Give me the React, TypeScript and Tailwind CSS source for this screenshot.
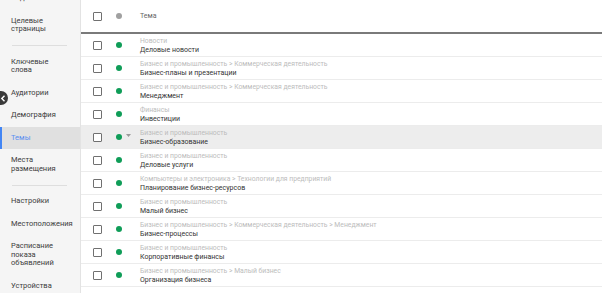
import React from "react";

type Item = { label: string[]; active?: boolean } | { sep: true };

const nav: Item[] = [
  { label: ["Видео"] },
  { label: ["Целевые", "страницы"] },
  { sep: true },
  { label: ["Ключевые", "слова"] },
  { label: ["Аудитории"] },
  { label: ["Демография"] },
  { label: ["Темы"], active: true },
  { label: ["Места", "размещения"] },
  { sep: true },
  { label: ["Настройки"] },
  { label: ["Местоположения"] },
  { label: ["Расписание", "показа", "объявлений"] },
  { label: ["Устройства"] },
];

const rows = [
  { cat: "Новости", name: "Деловые новости" },
  { cat: "Бизнес и промышленность > Коммерческая деятельность", name: "Бизнес-планы и презентации" },
  { cat: "Бизнес и промышленность > Коммерческая деятельность", name: "Менеджмент" },
  { cat: "Финансы", name: "Инвестиции" },
  { cat: "Бизнес и промышленность", name: "Бизнес-образование", hover: true },
  { cat: "Бизнес и промышленность", name: "Деловые услуги" },
  { cat: "Компьютеры и электроника > Технологии для предприятий", name: "Планирование бизнес-ресурсов" },
  { cat: "Бизнес и промышленность", name: "Малый бизнес" },
  { cat: "Бизнес и промышленность > Коммерческая деятельность > Менеджмент", name: "Бизнес-процессы" },
  { cat: "Бизнес и промышленность", name: "Корпоративные финансы" },
  { cat: "Бизнес и промышленность > Малый бизнес", name: "Организация бизнеса" },
  { cat: "", name: "" },
];

function Checkbox() {
  return <div className="w-[9px] h-[9px] border-[1.5px] border-[#707070] rounded-[1px] bg-white shrink-0" />;
}

export default function App() {
  return (
    <div
      className="relative w-[602px] h-[293px] overflow-hidden flex bg-white"
      style={{ fontFamily: "Roboto, 'Noto Sans', sans-serif" }}
    >
      {/* sidebar */}
      <div className="w-[81px] shrink-0 bg-[#f5f5f5] border-r border-[#e3e3e3]">
        <div className="-mt-[13px] flex flex-col">
          {nav.map((it, i) =>
            "sep" in it ? (
              <div key={i} className="mx-[12px] w-[55px] h-px bg-[#dedede] my-[4.5px]" />
            ) : (
              <div
                key={i}
                className={
                  "py-[7px] text-[7.5px] leading-[8.5px] " +
                  (it.active
                    ? "bg-[#e0e0e0] text-[#5b8ff0] border-l-2 border-[#4285f4] pl-[9px]"
                    : "text-[#3c3c3c] pl-[11px]")
                }
              >
                {it.label.map((l) => (
                  <div key={l}>{l}</div>
                ))}
              </div>
            )
          )}
        </div>
      </div>

      {/* table */}
      <div className="flex-1 flex flex-col">
        <div className="h-[34px] shrink-0 flex items-center border-b-2 border-[#7a7a7a]">
          <div className="w-[59px] flex items-center pl-[12px] gap-[14px]">
            <Checkbox />
            <div className="w-[6px] h-[6px] rounded-full bg-[#a0a0a0]" />
          </div>
          <span className="text-[7px] text-[#666]">Тема</span>
        </div>
        {rows.map((r, i) => (
          <div
            key={i}
            className={
              "h-[23px] shrink-0 flex items-center border-b border-[#ececec] " +
              (r.hover ? "bg-[#ededed]" : "")
            }
          >
            {r.name && (
              <>
                <div className="w-[59px] flex items-center pl-[12px] gap-[14px] relative">
                  <Checkbox />
                  <div className="w-[6px] h-[6px] rounded-full bg-[#0f9d58]" />
                  {r.hover && (
                    <svg className="absolute left-[45px] top-[1.5px]" width="5" height="3" viewBox="0 0 5 3">
                      <path d="M0 0h5L2.5 3z" fill="#9a9a9a" />
                    </svg>
                  )}
                </div>
                <div className="flex flex-col leading-[8.7px] pt-[1px]">
                  <span className="text-[6.8px] text-[#bcbcbc] whitespace-nowrap">{r.cat}</span>
                  <span className="text-[7px] text-[#333] whitespace-nowrap">{r.name}</span>
                </div>
              </>
            )}
          </div>
        ))}
      </div>

      {/* collapse button */}
      <div className="absolute left-[-6px] top-[91px] w-[14px] h-[14px] rounded-full bg-[#3a3a3a] flex items-center justify-end pr-[2px]">
        <svg width="6" height="7" viewBox="0 0 6 7">
          <path d="M4.5 0.8L1.8 3.5l2.7 2.7" stroke="#fff" strokeWidth="1.4" fill="none" />
        </svg>
      </div>
    </div>
  );
}
